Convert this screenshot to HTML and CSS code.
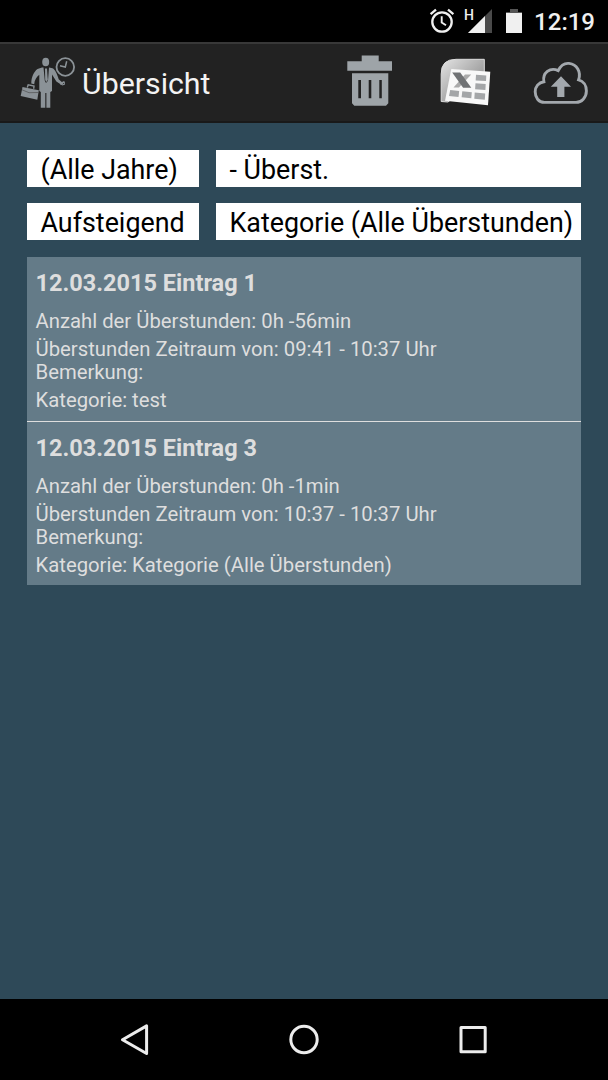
FILE: index.html
```html
<!DOCTYPE html>
<html lang="de">
<head>
  <meta charset="UTF-8">
  <meta name="viewport" content="width=device-width, initial-scale=1.0">
  <title>Übersicht</title>
  <link rel="stylesheet" href="styles.css">
</head>
<body>

<!-- Statusleiste -->
<div class="status-bar">
  <svg class="alarm" width="26" height="26" viewBox="0 0 26 26" fill="none" stroke="#f0f0f0" stroke-width="2.3">
    <circle cx="13" cy="14" r="9.7"/>
    <path d="M12.7 8.3v6.2l4.3 2.7" stroke-width="1.9"/>
    <path d="M1.6 6.2L7 1.7M24.4 6.2L19 1.7"/>
  </svg>
  <div class="signal">
    <span>H</span>
    <svg width="24" height="24" viewBox="0 0 24 24">
      <path d="M0 24L24 0v24z" fill="#4a4a4a"/>
      <path d="M0 24L17 7v17z" fill="#f0f0f0"/>
    </svg>
  </div>
  <svg class="battery" width="16" height="24" viewBox="0 0 16 24">
    <path d="M4 0h8v3h4v1.5H0V3h4z" fill="#555"/>
    <path d="M0 4h16v20H0z" fill="#f0f0f0"/>
  </svg>
  <span class="time">12:19</span>
</div>

<!-- Kopfzeile mit Aktionen -->
<header class="action-bar">
  <svg class="logo" width="56" height="54" viewBox="0 0 56 54" fill="#8b9297">
    <ellipse cx="25.7" cy="6" rx="3.5" ry="4.3"/>
    <path d="M22 11.5L17.5 13C14 15.5 11.3 21 11.3 27.5L14.2 28.2C14.5 24 16.5 21 19.3 18.7V35L20.8 36V51.8H25.3V37H26.4V51.8H30.3V36L32 35V18.5L36.4 25.5L42 29.3L43.2 27.3L38.7 23.3C37.2 18 35 13.3 32.5 12.3L29 11.5L28 24.8L26 27L24.8 24.8L23.5 11.5z"/>
    <path d="M25 12.5h2l.8 11.5-1.5 2-1.1-2z"/>
    <path d="M40.5 28.5l3.2-3.2M42 29l2.3-.6v-3" fill="none" stroke="#8b9297" stroke-width="1.1"/>
    <path d="M2.5 31L18.8 34.2L17.3 43.8L.7 40z"/>
    <path d="M7.3 31.5L8.2 28.8L14 30L13.7 32.8" fill="none" stroke="#8b9297" stroke-width="1.4"/>
    <path d="M2 33.8L9 36.7L18.3 36.5" fill="none" stroke="#444" stroke-width=".6"/>
    <circle cx="45.3" cy="11" r="8.8" fill="none" stroke="#8b9297" stroke-width="1.8"/>
    <path d="M46.7 5.3L45.3 11L40 9.7" fill="none" stroke="#8b9297" stroke-width="1.5"/>
  </svg>
  <h1>Übersicht</h1>
  <div class="actions">
    <svg class="trash" width="48" height="54" viewBox="0 0 48 54" fill="#9ea4a8">
      <path d="M15.7 1.5h17v5.8h13.3v9.4H1.3V7.3h14.4z"/>
      <path fill-rule="evenodd" d="M6 19.3h36.3v30l-2.3 2.4H8.3L6 49.3zM12.3 26v18.3H15V26zM22.7 26v18.3h2.6V26zM33.3 26v18.3h2.5V26z"/>
    </svg>
    <svg class="excel" width="52" height="50" viewBox="0 0 52 50">
      <defs>
        <linearGradient id="sheet" x1="0" y1="0" x2="1" y2="1">
          <stop offset="0" stop-color="#e4e4e4"/>
          <stop offset="1" stop-color="#777"/>
        </linearGradient>
      </defs>
      <path d="M1.2 43.5V16Q1 1.3 16 1.3h28.3v14L8 44z" fill="url(#sheet)" stroke="#ddd"/>
      <path d="M11.3 11L50.3 13.8L48 47.3L5 42.7z" fill="#f8f8f8"/>
      <g fill="#a4a6a8">
        <path d="M36 16.8l10.3.7-.3 5.6-10.3-.7z"/>
        <path d="M35.5 25.3l10.2.8-.3 6-10.3-.8z"/>
        <path d="M34.7 34.5l10.5 1-.4 6.3-10.5-1z"/>
        <path d="M22.3 33.3l9.5.9-.5 6-9.7-.9z"/>
        <path d="M10.2 32l9 .9-.7 6-9.5-1z"/>
      </g>
      <path d="M25 16.5h6.2L19 29.5h-5.5z" fill="#aaa"/>
      <path d="M12.2 14.5h8L31.3 29.7h-8.2z" fill="#707274"/>
    </svg>
    <svg width="56" height="46" viewBox="0 0 56 46">
      <path d="M12.5 42.4C6.5 42.4 3.2 37.5 3.2 31.7C3.2 26.8 6.5 22.5 11.9 21.7C10.2 13 18 6.8 26.2 10.6C29 5 33.5 3 37 3.4C45 4.2 49.3 12 46.6 19.8C51.5 21 54.4 25.5 54.4 31C54.4 37.5 49.5 42.4 44 42.4z" fill="none" stroke="#a3a8ad" stroke-width="2.9"/>
      <path d="M29 16.2L39 26.8H32.4V37H25.2V26.8H18.8z" fill="#a3a8ad"/>
    </svg>
  </div>
</header>

<main>
  <div class="filters">
    <div class="select">(Alle Jahre)</div>
    <div class="select">- Überst.</div>
    <div class="select">Aufsteigend</div>
    <div class="select">Kategorie (Alle Überstunden)</div>
  </div>

  <div class="entries">
    <div class="entry">
      <h2>12.03.2015 Eintrag 1</h2>
      <p>Anzahl der Überstunden: 0h -56min</p>
      <p>Überstunden Zeitraum von: 09:41 - 10:37 Uhr<br>Bemerkung:</p>
      <p>Kategorie: test</p>
    </div>
    <div class="entry">
      <h2>12.03.2015 Eintrag 3</h2>
      <p>Anzahl der Überstunden: 0h -1min</p>
      <p>Überstunden Zeitraum von: 10:37 - 10:37 Uhr<br>Bemerkung:</p>
      <p>Kategorie: Kategorie (Alle Überstunden)</p>
    </div>
  </div>
</main>

<!-- Navigationsleiste -->
<nav class="nav-bar">
  <svg width="32" height="32" viewBox="0 0 32 32"><path d="M3.5 15.7L27.6 1.9V29.5z"/></svg>
  <svg width="32" height="32" viewBox="0 0 32 32"><circle cx="16" cy="15.5" r="13.2"/></svg>
  <svg width="32" height="32" viewBox="0 0 32 32"><rect x="4" y="3.5" width="24.2" height="24.2"/></svg>
</nav>

</body>
</html>
```
FILE: styles.css
```css
* {
  box-sizing: border-box;
}
body {
  margin: 0;
  height: 1080px;
  display: flex;
  flex-direction: column;
  font-family: Roboto, sans-serif;
  background-color: #2e4958;
  overflow: hidden;
}
svg {
  display: block;
  flex: none;
}
.status-bar {
  height: 42px;
  padding-right: 13px;
  display: flex;
  justify-content: flex-end;
  align-items: flex-start;
  background-color: #000;
  color: #f0f0f0;
}
.alarm {
  margin-top: 8px;
}
.signal {
  display: flex;
  align-items: flex-start;
  margin: 9px 14px 0 9px;
}
.signal span {
  width: 4px;
  font-size: 14px;
  line-height: 13px;
  font-weight: 500;
}
.battery {
  margin-top: 9px;
}
.time {
  margin-left: 12px;
  font-size: 24px;
  line-height: 45px;
  font-weight: 500;
}
.action-bar {
  height: 81px;
  padding: 0 20px;
  display: flex;
  align-items: center;
  background-color: #222;
  border-top: 2px solid #383838;
  border-bottom: 2px solid #191919;
}
.action-bar h1 {
  margin: 2px 0 0 6px;
  font-size: 30.3px;
  font-weight: normal;
  color: #f3f3f3;
}
.actions {
  display: flex;
  align-items: center;
  margin-left: auto;
}
.trash {
  margin: 0 46px 3px 0;
}
.excel {
  margin-right: 40px;
}
main {
  flex: 1;
  padding: 27px;
}
.filters {
  display: grid;
  grid-template-columns: 172px 1fr;
  gap: 16.4px 17px;
}
.select {
  height: 37px;
  padding-left: 13.5px;
  font-size: 26.85px;
  line-height: 40px;
  white-space: nowrap;
  background-color: #fff;
  color: #000;
}
.entries {
  margin-top: 16.6px;
}
.entry {
  height: 164px;
  padding: 12px 8.5px 0;
  background-color: #647b88;
  color: #dedede;
}
.entry + .entry {
  border-top: 1px solid #dedede;
}
.entry h2 {
  margin: 0 0 13px;
  font-size: 23.5px;
  line-height: 28px;
}
.entry p {
  margin: 0 0 4px;
  font-size: 20.3px;
  line-height: 23.6px;
}
.nav-bar {
  height: 81px;
  display: flex;
  justify-content: center;
  align-items: center;
  gap: 137px;
  background-color: #000;
}
.nav-bar svg {
  fill: none;
  stroke: #ececec;
  stroke-width: 3;
  stroke-linejoin: round;
}
```
